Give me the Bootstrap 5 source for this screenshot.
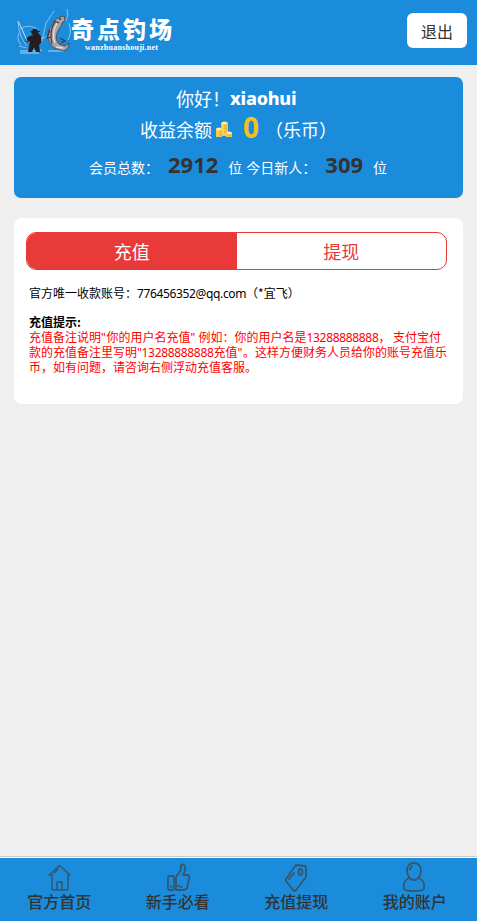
<!DOCTYPE html>
<html lang="zh-CN">
<head>
<meta charset="utf-8">
<meta name="viewport" content="width=device-width, initial-scale=1">
<title>奇点钓场</title>
<link href="https://cdn.jsdelivr.net/npm/bootstrap@5.3.0/dist/css/bootstrap.min.css" rel="stylesheet">
<style>
body{background:#efefef;font-family:"Noto Sans","Noto Sans CJK SC",sans-serif;color:#333;min-height:921px}
.blue{background:#1b8bdb}
.topbar{height:65px;padding:0 10px 0 15px}
.brand-art{width:56px;height:48px}
.brand-name{font:900 23px/28px "Noto Sans CJK SC",sans-serif;letter-spacing:3px;white-space:nowrap}
.brand-url{font:bold 8px/9px "Liberation Serif",serif;padding-left:14px;letter-spacing:.25px;margin-top:1px}
.btn-exit{width:60px;height:35px;border-radius:6px;font:16px/34px "Noto Sans CJK SC",sans-serif;color:#333;margin-bottom:4px}
.summary{margin:12px 14px 0;height:121px;border-radius:7px}
.line{white-space:nowrap;font-family:"Noto Sans CJK SC",sans-serif}
.hello{font-size:18px;line-height:24px;margin-top:9px;padding-left:162px}
.hello b{font-family:"Noto Sans",sans-serif;font-weight:800;letter-spacing:-.25px}
.money{font-size:18px;height:32px;line-height:32px;padding-left:126px;margin-top:3px}
.money b{font:bold 28px/32px "Noto Sans",sans-serif;color:#f5c118;margin:-4px 6px 0 11px}
.counts{font-size:14px;line-height:30px;height:30px;padding-left:75px;margin-top:7px}
.counts b{font:bold 22px/30px "Noto Sans",sans-serif;color:#333;margin:-6px 10px 0 9px}
.panel{margin:20px 14px 0;height:186px;border-radius:8px;padding:14px 16px 0 12px}
.tabs{height:38px;border:1px solid #e93a3a;border-radius:10px;overflow:hidden}
.tabs a{font:18px/36px "Noto Sans CJK SC",sans-serif;color:#e93a3a;text-decoration:none}
.tabs a.on{background:#e93a3a;color:#fff}
.notes{font:12px/15px "Noto Sans CJK SC",sans-serif;color:#000;padding:15px 0 0 3px;white-space:nowrap}
.notes div{height:15px}
.notes .tip{margin-top:14px}
.notes .n{font-family:"Noto Sans",sans-serif;line-height:1;letter-spacing:-.33px}
.notes .mail{letter-spacing:-.36px}
.notes .q{letter-spacing:.5px}
.red{color:#f00}
.dock{height:65px;border-top:1px solid #c9c9c9;background:#fff;padding-top:1px}
.dock a{color:#333;text-decoration:none;font:16px/22px "Noto Sans CJK SC",sans-serif;font-weight:500}
.dock svg{width:32px;height:32px;fill:none;stroke:#34576f;stroke-width:1.8;stroke-linejoin:round;stroke-linecap:round}
.dock-items{height:63px;padding:3px 3px 0 0}
.dock span{margin-top:-3px}
</style>
</head>
<body class="d-flex flex-column">
<header class="topbar blue d-flex align-items-center justify-content-between">
 <div class="d-flex align-items-center">
  <svg class="brand-art" viewBox="0 0 56 48" fill="none">
   <path d="M3 13Q4 28 12 37M5 20Q14 14 24 21M4 24Q1 30 6 36M4 37L12 39M27 32L31 14 39 2M51 12Q54 6 52 0M54 14Q57 24 53 31M26 29q4 1 7-3" stroke="#8dc9f0" stroke-width=".9"/>
   <path d="M5 42h8l3-1 3 1 8-1M5 44h19M33 42h16" stroke="#c1ddee" stroke-width=".9"/>
   <path d="M15 22h2l1-2h4l1 2h2v1h-2l1 2 2 2v7l-2 2 1 7h-4l-2-5-2 5h-4l2-11-4 1-1-3 5-3 3-1z" fill="#241e20"/>
   <path d="M3 12l4 8 5 12" stroke="#d5dce0"/>
   <path d="M49 7c-6 1-10 4-12 9-4 5-5 12-3 16 2 5 5 7 8 8l7 2 4-3 1-5-4 3-6-2c-4-4-3-9-1-13 1-3 4-5 4-8l3-3z" fill="#a9a5a6" stroke="#4c3a3b" stroke-width=".8"/>
   <path d="M40 13c-4 6-5 14-3 22M35 21l-3 8 4-1M45 29l5 3-4 2M39 12l5 2" stroke="#49383a" stroke-width="1.2"/>
   <path d="M42 14c-4 7-5 13-2 20M41 38l7 1" stroke="#e4dfdc" stroke-width="1.4"/><circle cx="45" cy="10" r="1" fill="#332a2c"/>
  </svg>
  <div class="text-white"><div class="brand-name">奇点钓场</div><div class="brand-url">wanzhuanshouji.net</div></div>
 </div>
 <a class="btn btn-exit bg-white p-0" href="#">退出</a>
</header>
<section class="summary blue text-white d-flex flex-column">
 <div class="line hello d-flex">你好！<b>xiaohui</b></div>
 <div class="line money d-flex align-items-center">收益余额
  <svg width="16" height="17" viewBox="0 0 16 17" class="ms-1"><path d="M5 2q3-3 7 0v13H5zM0 8q3-3 6 0v8H0zM10 12q3-3 6 0v4h-6z" fill="#f4c84a"/><path d="M6 5h5M6 8h5M6 11h5M1 11h5M1 14h5M11 14h4" stroke="#dca52f" stroke-width=".8"/><ellipse cx="8.500" cy="2" rx="3" ry="1.200" fill="#fff29d"/><ellipse cx="3" cy="8" rx="2.800" ry="1.200" fill="#fff29d"/><ellipse cx="13" cy="12" rx="2.800" ry="1.200" fill="#fff29d"/><path d="M2 9v6M7 3v10" stroke="#ffe773"/></svg>
  <b>0</b>（乐币）</div>
 <div class="line counts d-flex align-items-center"><span>会员总数：</span><b>2912</b><span>位</span><span class="ms-1">今日新人：</span><b>309</b><span>位</span></div>
</section>
<main class="panel bg-white">
 <nav class="tabs d-flex"><a class="on w-50 text-center" href="#">充值</a><a class="w-50 text-center" href="#">提现</a></nav>
 <div class="notes">
  <div>官方唯一收款账号：<span class="n mail">776456352@qq.com</span>（*宜飞）</div>
  <div class="fw-bold tip">充值提示:</div>
  <div class="red">充值备注说明<span class="n q">"</span>你的用户名充值<span class="n q">"</span> 例如：你的用户名是<span class="n">13288888888</span>， 支付宝付</div>
  <div class="red">款的充值备注里写明<span class="n">"13288888888</span>充值<span class="n q">"</span>。这样方便财务人员给你的账号充值乐</div>
  <div class="red">币，如有问题，请咨询右侧浮动充值客服。</div>
 </div>
</main>
<footer class="dock mt-auto">
 <nav class="dock-items blue d-flex">
  <a class="col d-flex flex-column align-items-center" href="#"><svg viewBox="0 0 32 32"><path d="M6 14L16.500 4.500 27 14h-2v13q0 2-2 2H11q-2 0-2-2V14zM14 29v-8h5v8M11 12l4-4" stroke-width="1.500"/></svg><span>官方首页</span></a>
  <a class="col d-flex flex-column align-items-center" href="#"><svg viewBox="0 0 32 32"><rect x="6" y="15" width="6" height="14" rx="1.500"/><path d="M14 16l5-7V4q3-2 4 2 1 3-2 8h5q2 1 1 4l-2 9q-1 2-4 2H14zM16 25l4 1M9 25v1"/></svg><span>新手必看</span></a>
  <a class="col d-flex flex-column align-items-center" href="#"><svg viewBox="0 0 32 32"><path d="M16 4l9 1 1 2v9L16 29q-1 2-3 0L6 20q-1-1 0-2zM9 18l5-6"/><ellipse cx="20.500" cy="11" rx="2" ry="3"/></svg><span>充值提现</span></a>
  <a class="col d-flex flex-column align-items-center" href="#"><svg viewBox="0 0 32 32"><path d="M15 2c-5 0-7 4-7 8 0 4 3 9 7 9s7-5 7-9c0-4-2-8-7-8zM10 17c-4 2-6 6-5 11q1 2 10 2t10-2c1-5-1-9-5-11M11 9q0-3 2-4"/></svg><span>我的账户</span></a>
 </nav>
</footer>
<script src="https://cdn.jsdelivr.net/npm/bootstrap@5.3.0/dist/js/bootstrap.bundle.min.js"></script>
</body>
</html>
